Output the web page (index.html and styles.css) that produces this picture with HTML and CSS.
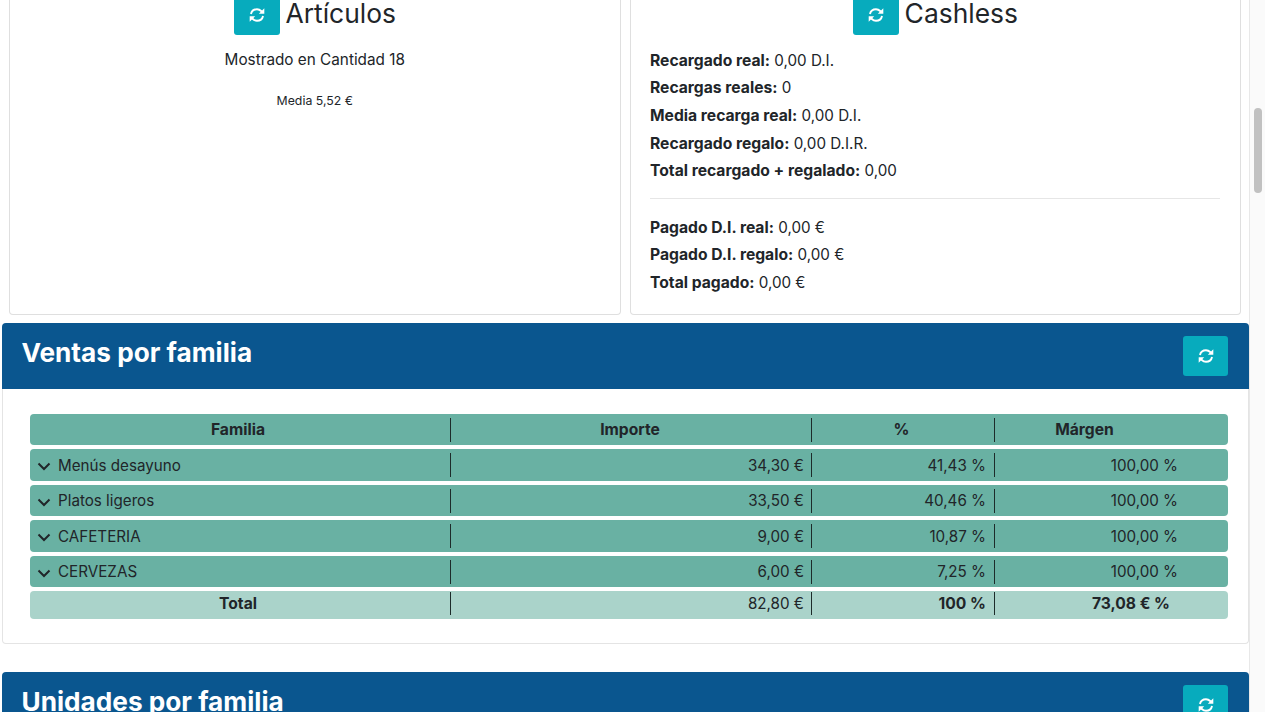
FILE: index.html
```html
<!DOCTYPE html>
<html lang="es">
<head>
    <meta charset="UTF-8">
    <title>Ventas</title>
    <link rel="stylesheet" href="styles.css">
</head>
<body>
    <svg class="icon-defs" width="0" height="0">
        <symbol id="sync" viewBox="0 0 512 512">
            <g fill="none" stroke="currentColor" stroke-width="60">
                <path d="M62 225C84 130 162 72 256 72c52 0 98 21 134 57l36 36"/>
                <path d="M450 287C428 382 350 440 256 440c-52 0-98-21-134-57l-36-36"/>
            </g>
            <path fill="currentColor" d="M490 38v176H314z"/>
            <path fill="currentColor" d="M22 474V298h176z"/>
        </symbol>
        <symbol id="chevron" viewBox="0 0 14 9">
            <path fill="none" stroke="currentColor" stroke-width="2" d="M1.5 1.5 7 7l5.5-5.5"/>
        </symbol>
    </svg>
    <div class="page">
        <div class="cards">
            <section class="card">
                <div class="card-title">
                    <button class="btn-refresh"><svg class="icon"><use href="#sync"/></svg></button>
                    <h3>Artículos</h3>
                </div>
                <p class="shown">Mostrado en Cantidad 18</p>
                <p class="media">Media 5,52 €</p>
            </section>
            <section class="card">
                <div class="card-title">
                    <button class="btn-refresh"><svg class="icon"><use href="#sync"/></svg></button>
                    <h3>Cashless</h3>
                </div>
                <ul class="stats">
                    <li><b>Recargado real:</b> 0,00 D.I.</li>
                    <li><b>Recargas reales:</b> 0</li>
                    <li><b>Media recarga real:</b> 0,00 D.I.</li>
                    <li><b>Recargado regalo:</b> 0,00 D.I.R.</li>
                    <li><b>Total recargado + regalado:</b> 0,00</li>
                </ul>
                <hr>
                <ul class="stats">
                    <li><b>Pagado D.I. real:</b> 0,00 €</li>
                    <li><b>Pagado D.I. regalo:</b> 0,00 €</li>
                    <li><b>Total pagado:</b> 0,00 €</li>
                </ul>
            </section>
        </div>

        <section class="panel">
            <div class="panel-head">
                <h2>Ventas por familia</h2>
                <button class="btn-refresh"><svg class="icon"><use href="#sync"/></svg></button>
            </div>
            <div class="panel-body">
                <div class="row row-head">
                    <div class="cell c-name">Familia</div>
                    <div class="cell c-amount">Importe</div>
                    <div class="cell c-pct">%</div>
                    <div class="cell c-margin">Márgen</div>
                </div>
                <div class="row">
                    <div class="cell c-name"><svg class="chevron"><use href="#chevron"/></svg>Menús desayuno</div>
                    <div class="cell c-amount">34,30 €</div>
                    <div class="cell c-pct">41,43 %</div>
                    <div class="cell c-margin">100,00 %</div>
                </div>
                <div class="row">
                    <div class="cell c-name"><svg class="chevron"><use href="#chevron"/></svg>Platos ligeros</div>
                    <div class="cell c-amount">33,50 €</div>
                    <div class="cell c-pct">40,46 %</div>
                    <div class="cell c-margin">100,00 %</div>
                </div>
                <div class="row">
                    <div class="cell c-name"><svg class="chevron"><use href="#chevron"/></svg>CAFETERIA</div>
                    <div class="cell c-amount">9,00 €</div>
                    <div class="cell c-pct">10,87 %</div>
                    <div class="cell c-margin">100,00 %</div>
                </div>
                <div class="row">
                    <div class="cell c-name"><svg class="chevron"><use href="#chevron"/></svg>CERVEZAS</div>
                    <div class="cell c-amount">6,00 €</div>
                    <div class="cell c-pct">7,25 %</div>
                    <div class="cell c-margin">100,00 %</div>
                </div>
                <div class="row row-total">
                    <div class="cell c-name">Total</div>
                    <div class="cell c-amount">82,80 €</div>
                    <div class="cell c-pct"><b>100 %</b></div>
                    <div class="cell c-margin"><b>73,08 € %</b></div>
                </div>
            </div>
        </section>

        <section class="panel">
            <div class="panel-head">
                <h2>Unidades por familia</h2>
                <button class="btn-refresh"><svg class="icon"><use href="#sync"/></svg></button>
            </div>
        </section>
    </div>
    <div class="scrollbar"><div class="scrollbar-thumb"></div></div>
</body>
</html>
```

FILE: styles.css
```css
html, body {
    height: 100%;
    overflow: hidden;
}
body {
    margin: 0;
    display: flex;
    font-family: Inter, "Liberation Sans", sans-serif;
    font-size: 15.2px;
    color: #212529;
    background-color: #fff;
}
.icon-defs {
    position: absolute;
}
.page {
    width: 1249px;
    margin-top: -5px;
    flex: none;
}
.scrollbar {
    flex: 1;
    border-left: 1px solid #e8e8e8;
    background-color: #fafafa;
}
.scrollbar-thumb {
    width: 8.5px;
    height: 85px;
    margin: 108px 0 0 3.5px;
    border-radius: 5px;
    background-color: #c1c1c1;
}
.cards {
    display: flex;
    gap: 9px;
    padding: 0 8px 0 9px;
    background-color: #fff;
}
.card {
    flex: 1;
    height: 320px;
    box-sizing: border-box;
    padding: 0 20px;
    border: 1px solid #dfdfdf;
    border-top: 0;
    border-radius: 0 0 4px 4px;
}
.card-title {
    display: flex;
    justify-content: center;
    gap: 6px;
    height: 40px;
}
.card-title h3 {
    margin: 0;
    font-size: 26.4px;
    font-weight: 400;
    line-height: 37px;
}
.shown {
    margin: 13px 0 0;
    font-size: 15.3px;
    text-align: center;
    line-height: 24px;
}
.media {
    margin: 20px 0 0;
    font-size: 12.3px;
    text-align: center;
    line-height: 18px;
}
.stats {
    margin: 0 0 0 -0.5px;
    padding: 0;
    list-style: none;
    line-height: 27.7px;
}
.card-title + .stats {
    margin-top: 11.5px;
}
.stats b {
    font-size: 15.67px;
    font-weight: 700;
}
hr {
    margin: 12.5px 0 15px -0.5px;
    border: 0;
    border-top: 1px solid #e6e6e6;
}
.btn-refresh {
    display: flex;
    align-items: center;
    justify-content: center;
    width: 46px;
    height: 40px;
    padding: 0;
    border: 0;
    border-radius: 3px;
    color: #fff;
    background-color: #07abbd;
}
.icon {
    width: 16px;
    height: 16px;
}
.panel {
    margin: 8px 0 0 2px;
    border-radius: 4px;
    background-color: #fff;
}
.panel + .panel {
    margin-top: 28px;
}
.panel-head {
    display: flex;
    align-items: center;
    justify-content: space-between;
    height: 66px;
    padding: 0 21px 0 19.5px;
    border-radius: 4px 4px 0 0;
    color: #fff;
    background-color: #0a568f;
}
.panel-head h2 {
    margin: 0 0 8px;
    font-size: 26.2px;
    font-weight: 700;
}
.panel-head .btn-refresh {
    width: 45px;
}
.panel-body {
    display: flex;
    flex-direction: column;
    gap: 4px;
    height: 255px;
    box-sizing: border-box;
    padding: 25px 20px 0 27px;
    border: 1px solid #e4e4e4;
    border-top: 0;
    border-radius: 0 0 4px 4px;
}
.row {
    display: flex;
    height: 31.45px;
    flex: none;
    border-radius: 4px;
    background-color: #69b1a3;
}
.row-total {
    height: 28px;
    background-color: #aad3ca;
}
.cell {
    display: flex;
    align-items: center;
    box-sizing: border-box;
    height: 24px;
    margin-top: 3.9px;
    border-right: 1px solid #1d2b2a;
}
.row-total .cell {
    height: 23px;
    margin-top: 0.8px;
}
.c-name {
    width: 421px;
    padding-left: 7px;
}
.c-amount {
    width: 361px;
    padding-right: 7px;
    justify-content: flex-end;
}
.c-pct {
    width: 183px;
    padding-right: 8px;
    justify-content: flex-end;
}
.c-margin {
    flex: 1;
    justify-content: flex-end;
    padding-right: 50px;
    border-right: 0;
}
.row-head .cell,
.row-total .c-name {
    justify-content: center;
    padding: 0;
    font-size: 15.65px;
    font-weight: 700;
}
.row-head .c-name,
.row-total .c-name {
    padding-right: 4px;
}
.row-head .c-amount {
    padding-right: 2px;
}
.row-head .c-pct {
    padding-right: 3px;
}
.row-head .c-margin {
    padding-right: 54px;
}
.row-total .c-margin {
    padding-right: 58px;
}
.row-total b {
    font-size: 15.65px;
    font-weight: 700;
}
.chevron {
    flex: none;
    width: 14px;
    height: 9px;
    margin: 3px 7px 0 0;
}
```
